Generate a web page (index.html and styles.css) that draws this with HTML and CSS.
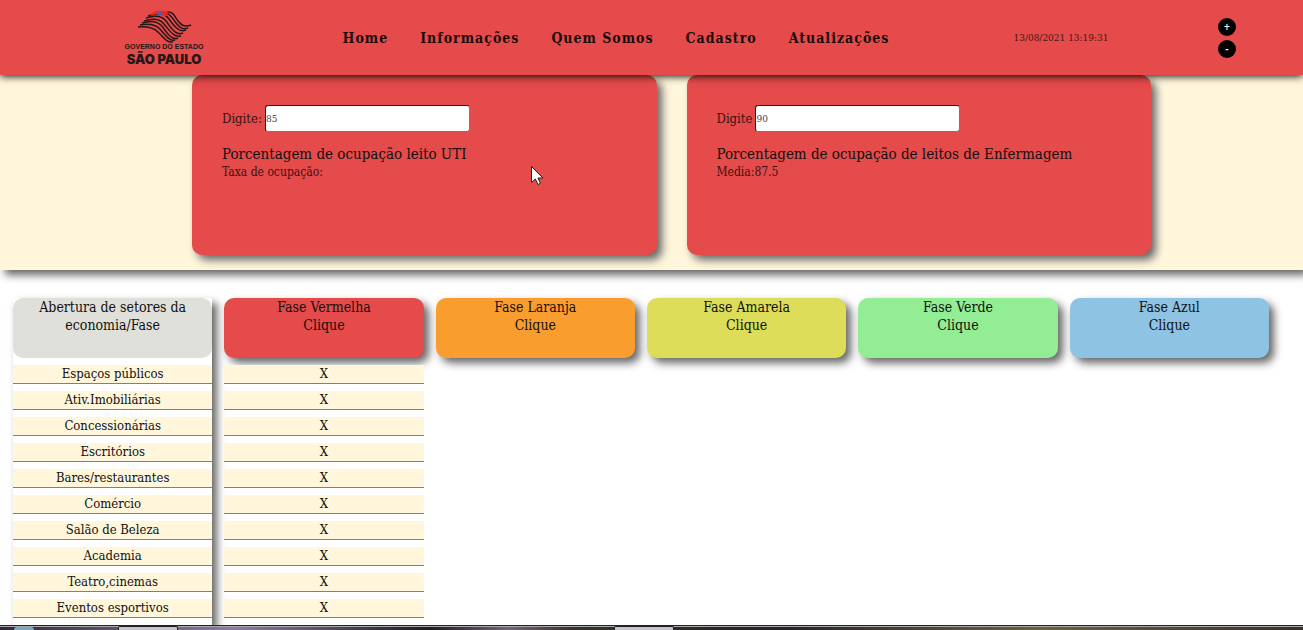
FILE: index.html
```html
<!DOCTYPE html>
<html lang="pt-BR">
<head>
<meta charset="utf-8">
<meta name="viewport" content="width=device-width, initial-scale=1">
<title>Plano São Paulo</title>
<link rel="stylesheet" href="styles.css">
</head>
<body>
<header class="topbar">
  <svg class="logo" width="82" height="56" viewBox="0 0 82 56" role="img" aria-label="Governo do Estado São Paulo">
    <g fill="none" stroke="#251819" stroke-width="1.5">
      <path d="M44 2C51 1 52 8 56 12C59 16 63 17 68 15"/>
      <path d="M40 4C47 2 49 8 53 13C57 18 60 20 65 18"/>
      <path d="M25 6C34 3 42 3 46 9C51 16 56 23 63 20"/>
      <path d="M23 8C32 5 39 6 43 11C49 19 53 26 60 23"/>
      <path d="M21 11C30 8 37 9 41 14C47 21 51 28 58 26"/>
      <path d="M19 13C28 10 34 11 39 16C44 23 49 31 55 28"/>
      <path d="M17 15C26 13 32 14 37 19C42 25 47 32 52 30"/>
      <path d="M15 17C24 16 30 17 35 22C40 27 44 33 50 32"/>
    </g>
    <path d="M30 2C35 0 41 1 46 2L42 7C37 4 33 4 27 6Z" fill="#f3281d"/>
    <path d="M33 3L38 2L40 4L36 6Z" fill="#2d68c5"/>
    <text class="logo-small" x="41" y="39">GOVERNO DO ESTADO</text>
    <text class="logo-large" x="41" y="54">SÃO PAULO</text>
  </svg>
  <nav class="menu">
    <a href="#home">Home</a>
    <a href="#informacoes">Informações</a>
    <a href="#quem-somos">Quem Somos</a>
    <a href="#cadastro">Cadastro</a>
    <a href="#atualizacoes">Atualizações</a>
  </nav>
  <time class="clock" datetime="2021-08-13T13:19:31">13/08/2021 13:19:31</time>
  <div class="zoom">
    <button type="button">+</button>
    <button type="button">-</button>
  </div>
</header>

<section class="rates">
  <div class="card">
    <div class="field"><label for="uti">Digite:</label><input id="uti" type="text" value="85"></div>
    <p class="card-title">Porcentagem de ocupação leito UTI</p>
    <p class="card-result">Taxa de ocupação:</p>
  </div>
  <div class="card">
    <div class="field"><label for="enfermagem">Digite</label><input id="enfermagem" type="text" value="90"></div>
    <p class="card-title">Porcentagem de ocupação de leitos de Enfermagem</p>
    <p class="card-result">Media:87.5</p>
  </div>
  <svg class="pointer" width="14" height="22" viewBox="0 0 14 22" aria-hidden="true">
    <path d="M1.500 1.500V17.500L5.300 14L8 19.500L10.500 18.300L8 13H13Z" fill="#fff" stroke="#231f20"/>
  </svg>
</section>

<main class="phases">
  <div class="column sectors">
    <h2 class="phase gray">Abertura de setores da economia/Fase</h2>
    <ul class="rows">
      <li>Espaços públicos</li>
      <li>Ativ.Imobiliárias</li>
      <li>Concessionárias</li>
      <li>Escritórios</li>
      <li>Bares/restaurantes</li>
      <li>Comércio</li>
      <li>Salão de Beleza</li>
      <li>Academia</li>
      <li>Teatro,cinemas</li>
      <li>Eventos esportivos</li>
    </ul>
  </div>
  <div class="column">
    <button type="button" class="phase red">Fase Vermelha<br>Clique</button>
    <ul class="rows">
      <li>X</li>
      <li>X</li>
      <li>X</li>
      <li>X</li>
      <li>X</li>
      <li>X</li>
      <li>X</li>
      <li>X</li>
      <li>X</li>
      <li>X</li>
    </ul>
  </div>
  <div class="column"><button type="button" class="phase orange">Fase Laranja<br>Clique</button></div>
  <div class="column"><button type="button" class="phase yellow">Fase Amarela<br>Clique</button></div>
  <div class="column"><button type="button" class="phase green">Fase Verde<br>Clique</button></div>
  <div class="column"><button type="button" class="phase blue">Fase Azul<br>Clique</button></div>
</main>

<footer class="taskbar">
  <span class="start"></span>
  <span class="task"></span>
  <span class="task second"></span>
</footer>
</body>
</html>
```

FILE: styles.css
```css
* {
  box-sizing: border-box;
  margin: 0;
  padding: 0;
}

body {
  background: #fff;
  color: #111;
  font-family: "DejaVu Serif Condensed", "DejaVu Serif", serif;
  font-size: 14px;
  line-height: 18px;
}

button,
input {
  font-family: inherit;
  color: inherit;
}

.topbar {
  position: relative;
  z-index: 1;
  display: grid;
  grid-template-columns: 328fr 576fr 314fr 85fr;
  align-items: center;
  min-height: 75px;
  background: #e44b4a;
  box-shadow: 0 1px 8px #000;
}

.logo {
  justify-self: center;
}

.logo-small,
.logo-large {
  fill: #251819;
  font-family: "Liberation Sans", sans-serif;
  font-weight: bold;
  text-anchor: middle;
}

.logo-small {
  font-size: 7px;
}

.logo-large {
  font-family: Inter, sans-serif;
  font-size: 13px;
  font-weight: 900;
}

.menu {
  display: flex;
  justify-content: center;
  gap: 32px;
}

.menu a {
  color: #1a0b0b;
  font-weight: bold;
  letter-spacing: 1px;
  text-decoration: none;
  white-space: nowrap;
}

.clock {
  justify-self: center;
  color: #4a1616;
  font-size: 10px;
}

.zoom {
  display: flex;
  flex-direction: column;
  gap: 4px;
}

.zoom button {
  width: 18px;
  height: 18px;
  border: 0;
  border-radius: 50%;
  background: #000;
  color: #fff;
  font-size: 9px;
  font-weight: bold;
  line-height: 18px;
}

.rates {
  position: relative;
  display: grid;
  grid-template-columns: 1fr 1fr;
  gap: 30px;
  padding: 0 152px 15px 192px;
  background: #fff6dc;
  box-shadow: 5px 5px 8px #666;
}

.card {
  min-height: 180px;
  padding: 30px;
  border-radius: 10px;
  background: #e44b4a;
  box-shadow: 5px 5px 8px #666;
}

.field {
  display: flex;
  align-items: center;
  gap: 3px;
  margin-bottom: 13px;
  color: #3a1212;
  font-size: 13px;
}

.field input {
  width: 205px;
  height: 27px;
  border: 1px solid;
  border-color: #222 #777 #777 #222;
  border-radius: 3px;
  background: #fff;
  color: #444;
  font-size: 10px;
}

.card-title {
  font-size: 15px;
}

.card-result {
  color: #3a1212;
  font-size: 12px;
}

.pointer {
  position: absolute;
  top: 90px;
  left: 530px;
}

.phases {
  display: grid;
  grid-template-columns: repeat(6, 1fr);
  gap: 12px;
  padding: 28px 34px 0 13px;
}

.sectors {
  background: #fff;
  box-shadow: 5px 5px 8px #666;
}

.phase {
  display: block;
  width: 100%;
  height: 60px;
  padding: 0 20px 24px;
  border: 0;
  border-radius: 10px;
  font-size: 14px;
  font-weight: normal;
  line-height: 18px;
  text-align: center;
  box-shadow: 5px 5px 8px #666;
}

.gray {
  background: #dfe0da;
  box-shadow: none;
}

.red {
  background: #e44b4a;
}

.orange {
  background: #f99d2f;
}

.yellow {
  background: #dddd59;
}

.green {
  background: #93ed94;
}

.blue {
  background: #8fc3e4;
}

.rows {
  position: relative;
  padding-top: 7px;
  list-style: none;
  font-size: 13px;
  text-align: center;
}

.rows li {
  margin-bottom: 7px;
  border-bottom: 1px solid gray;
  background: #fff6dc;
}

.taskbar {
  position: relative;
  display: flex;
  align-items: flex-end;
  height: 5px;
  overflow: hidden;
  border-top: 1px solid #222;
  background: linear-gradient(90deg, #31273d, #8d7ba3 18%, #51445f 26%, #211a20 33%, #75637c 39%, #39322a 44%, #282229 60%, #6e6041 80%, #39302b);
  box-shadow: inset 0 1px #aaa;
}

.start {
  width: 20px;
  height: 3px;
  margin-left: 14px;
  border-radius: 10px 10px 0 0;
  background: #78a9c0;
}

.task {
  width: 60px;
  height: 4px;
  margin-left: 84px;
  border: 1px solid #222;
  border-bottom: 0;
  border-radius: 2px 2px 0 0;
  background: #c9c4cf;
}

.second {
  margin-left: 436px;
}
```
